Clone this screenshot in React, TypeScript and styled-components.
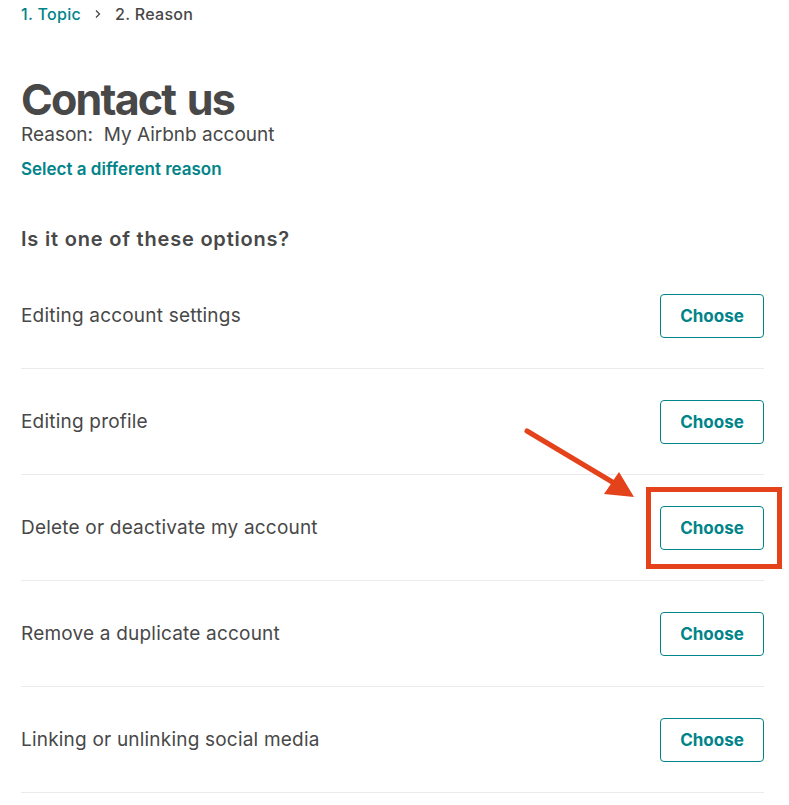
import React from "react";
import styled, { createGlobalStyle } from "styled-components";

const Global = createGlobalStyle`
  html, body { margin: 0; padding: 0; background: #fff; }
  body { font-family: Inter, "Noto Sans", "Liberation Sans", sans-serif; color: #484848; }
  * { box-sizing: border-box; }
`;

const Page = styled.div`
  position: relative;
  padding: 0 25px 0 21px;
`;

const Breadcrumb = styled.nav`
  display: flex;
  align-items: center;
  gap: 12px;
  height: 28px;
  font-size: 16px;
  font-weight: 500;
  letter-spacing: 0.3px;
`;

const Crumb = styled.span<{ $active?: boolean }>`
  color: ${(p) => (p.$active ? "#008489" : "#484848")};
`;

const Heading = styled.h1`
  margin: 49px 0 0;
  font-size: 43px;
  font-weight: 700;
  line-height: 44px;
  letter-spacing: -1.8px;
  word-spacing: 3px;
  color: #484848;
`;

const ReasonLine = styled.div`
  font-size: 19px;
  line-height: 22px;
  margin-top: 3px;
`;

const Link = styled.a`
  display: block;
  margin-top: 12px;
  font-size: 17px;
  font-weight: 600;
  line-height: 22px;
  color: #008489;
  text-decoration: none;
`;

const SubHeading = styled.h2`
  margin: 47px 0 0;
  font-size: 20px;
  font-weight: 600;
  line-height: 24px;
  letter-spacing: 0.8px;
`;

const List = styled.div`
  margin-top: 12px;
  display: flex;
  flex-direction: column;
`;

const Row = styled.div`
  display: flex;
  align-items: center;
  justify-content: space-between;
  padding: 31px 0 30px;
  border-bottom: 1px solid #ebebeb;
`;

const RowLabel = styled.span`
  font-size: 19px;
  line-height: 24px;
  letter-spacing: 0.2px;
`;

const ButtonWrap = styled.div<{ $highlight?: boolean }>`
  position: relative;
  &::after {
    content: "";
    display: ${(p) => (p.$highlight ? "block" : "none")};
    position: absolute;
    left: -14px;
    top: -19px;
    right: -18px;
    bottom: -19px;
    border: 5px solid #e4421b;
    pointer-events: none;
  }
`;

const ChooseButton = styled.button`
  width: 104px;
  height: 44px;
  border: 1px solid #008489;
  border-radius: 4px;
  background: #fff;
  color: #008489;
  font-family: inherit;
  font-size: 17px;
  font-weight: 700;
  cursor: pointer;
`;

const Arrow = styled.svg`
  position: absolute;
  left: 520px;
  top: 424px;
  pointer-events: none;
`;

const options = [
  "Editing account settings",
  "Editing profile",
  "Delete or deactivate my account",
  "Remove a duplicate account",
  "Linking or unlinking social media",
];

export default function App() {
  return (
    <>
      <Global />
      <Page>
        <Breadcrumb>
          <Crumb $active>1. Topic</Crumb>
          <svg width="10" height="10" viewBox="0 0 10 10">
            <path d="M3 1.5 L6.5 5 L3 8.5" fill="none" stroke="#484848" strokeWidth="1.3" />
          </svg>
          <Crumb>2. Reason</Crumb>
        </Breadcrumb>
        <Heading>Contact us</Heading>
        <ReasonLine>Reason:&nbsp; My Airbnb account</ReasonLine>
        <Link href="#">Select a different reason</Link>
        <SubHeading>Is it one of these options?</SubHeading>
        <List>
          {options.map((o, i) => (
            <Row key={o}>
              <RowLabel>{o}</RowLabel>
              <ButtonWrap $highlight={i === 2}>
                <ChooseButton>Choose</ChooseButton>
              </ButtonWrap>
            </Row>
          ))}
        </List>
        <Arrow width="120" height="80" viewBox="0 0 120 80">
          <line x1="7" y1="7" x2="94" y2="59" stroke="#e4421b" strokeWidth="5" strokeLinecap="round" />
          <polygon points="99,48 84,70 114,73" fill="#e4421b" />
        </Arrow>
      </Page>
    </>
  );
}
